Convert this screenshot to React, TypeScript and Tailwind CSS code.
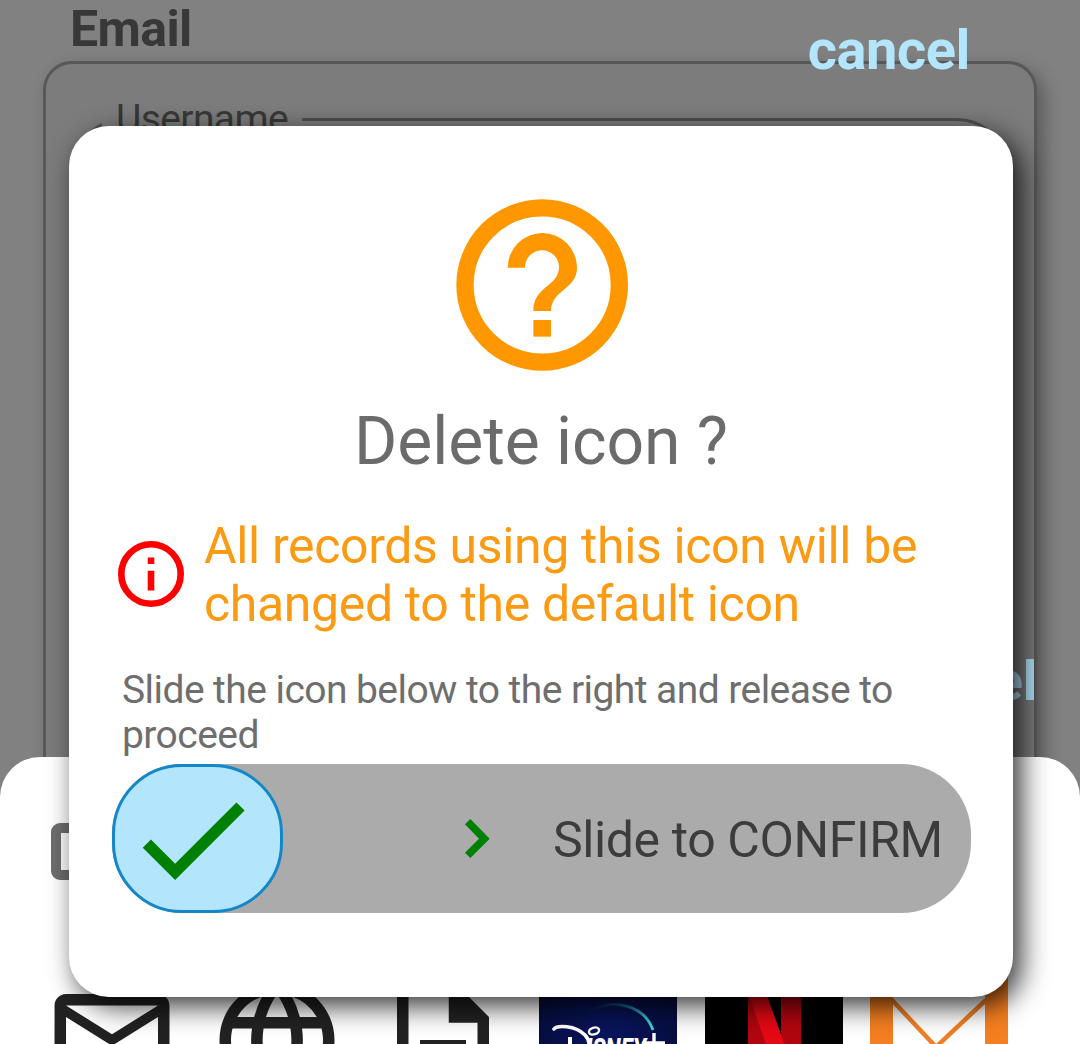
import { MdOutlineDescription, MdLanguage, MdMailOutline, MdCheck } from "react-icons/md";

function HelpIcon() {
  return (
    <svg className="mt-[54px] ml-[361px] h-[210px] w-[230px] shrink-0" viewBox="0 0 690 630" fill="#ff9800">
      <circle cx="336.5" cy="315" r="231.5" fill="none" stroke="#ff9800" strokeWidth="52" />
      <path d="M233 263A104 104 0 0 1 441 263C441 328 363 330 363 393H310C310 318 387 320 387 261A51 51 0 0 0 285 263Z" />
      <rect x="310" y="420" width="53" height="50" />
    </svg>
  );
}

function InfoIcon() {
  return (
    <svg className="-mt-[2px] h-[66px] w-[66px] shrink-0" viewBox="2 2 20 20" fill="#ff0000">
      <circle cx="12" cy="12" r="9" fill="none" stroke="#ff0000" strokeWidth="2" />
      <path d="M11 7h2v2h-2zM11 11h2v6h-2z" />
    </svg>
  );
}

function ArrowIcon() {
  return (
    <svg className="ml-[182px] h-[39px] w-[25px] shrink-0" viewBox="0 0 75 117" fill="#008000">
      <path d="M0 16L16 0L74 59L16 117L0 101L42 59Z" />
    </svg>
  );
}

function DisneyTile() {
  return (
    <svg className="h-[138px] w-[138px] shrink-0" viewBox="0 0 138 138">
      <defs>
        <radialGradient id="navy" cx="50%" cy="50%" r="65%">
          <stop offset="0" stopColor="#081660" />
          <stop offset="1" stopColor="#070b38" />
        </radialGradient>
        <linearGradient id="arc" x1="0" x2="1">
          <stop offset="0" stopColor="#0a2a70" stopOpacity="0" />
          <stop offset="0.6" stopColor="#14698c" />
          <stop offset="1" stopColor="#3fe0e6" />
        </linearGradient>
      </defs>
      <rect width="138" height="138" fill="url(#navy)" />
      <path d="M48 41C76 25 106 36 114 59" fill="none" stroke="url(#arc)" strokeWidth="2.8" />
      <path d="M15 58C18 54 36 54 46 64C54 73 50 83 38 86C24 88 20 76 33 75" fill="none" stroke="#fff" strokeWidth="3.6" strokeLinecap="round" />
      <path d="M31 66v24" stroke="#fff" strokeWidth="4" />
      <ellipse cx="55" cy="60" rx="5.2" ry="3.4" fill="none" stroke="#fff" strokeWidth="2.4" transform="rotate(-18 55 60)" />
      <text x="47" y="88" fontSize="29" fontWeight="800" fontStyle="italic" fill="#fff" textLength="60" lengthAdjust="spacingAndGlyphs">
        ISNEY
      </text>
      <path d="M115 62v26M105 72h21" stroke="#fff" strokeWidth="3.4" />
    </svg>
  );
}

function NetflixTile() {
  return (
    <svg className="h-[138px] w-[138px] shrink-0" viewBox="0 0 138 138">
      <rect width="138" height="138" fill="#000" />
      <path d="M43 22h18v94H43zM76 22h20v94H76z" fill="#b1060f" />
      <path d="M43 22h18l34 94H76z" fill="#e50914" />
    </svg>
  );
}

function MailTile() {
  return (
    <svg className="h-[138px] w-[138px] shrink-0" viewBox="0 0 138 138">
      <rect width="138" height="138" fill="#f57f20" />
      <path d="M23 23h92v92H23z" fill="#fff" />
      <path d="M22 29L66 76L116 29" fill="none" stroke="#f08025" strokeWidth="4.5" />
    </svg>
  );
}

function Backdrop() {
  return (
    <div className="flex h-[1044px] flex-col bg-[#818181] text-[#383838]">
      <h1 className="ml-[70px] h-[61px] shrink-0 text-[50px] leading-[58px] font-bold tracking-[-0.6px]">Email</h1>
      <section className="mr-[43px] ml-[43px] h-[900px] shrink-0 rounded-[29px] border-3 border-[#585858] bg-[#7c7c7c] pt-[35px] shadow-[7px_8px_18px_rgba(0,0,0,0.3)]">
        <fieldset className="mr-[24px] ml-[25px] h-[200px] rounded-[54px] border-[3px] border-[#505050] pl-[28px]">
          <legend className="px-[14px] text-[39px] leading-[40px] tracking-[-0.6px]">Username</legend>
        </fieldset>
      </section>
    </div>
  );
}

function IconSheet() {
  return (
    <section className="absolute inset-x-0 bottom-0 h-[287px] overflow-hidden rounded-t-[40px] bg-white pt-[66px] pl-[43px]">
      <div className="ml-[8px] h-[57px] w-[80px] rounded-[9px] border-[10px] border-[#6e6e6e]" />
      <div className="mt-[91px] flex w-[980px] gap-[27.4px] text-[#222]">
        <MdMailOutline className="size-[138px] shrink-0" />
        <MdLanguage className="size-[138px] shrink-0" />
        <MdOutlineDescription className="size-[138px] shrink-0" />
        <DisneyTile />
        <NetflixTile />
        <MailTile />
      </div>
    </section>
  );
}

function ConfirmDialog() {
  return (
    <section className="absolute top-[126px] left-[69px] flex h-[871px] w-[944px] flex-col rounded-[40px] bg-white shadow-[8px_9px_28px_rgba(0,0,0,0.8)]">
      <HelpIcon />
      <h2 className="mt-[13px] text-center text-[66px] leading-[77px] tracking-[-0.05px] text-[#6b6b6b]">Delete icon ?</h2>
      <div className="mt-[37px] ml-[48.5px] flex items-center gap-[20.5px] text-[#fb9a13]">
        <InfoIcon />
        <p className="text-[50px] leading-[58px] tracking-[-0.36px] whitespace-nowrap">
          All records using this icon will be
          <br />
          changed to the default icon
        </p>
      </div>
      <p className="mt-[35px] ml-[53px] text-[39px] leading-[45px] tracking-[-0.56px] whitespace-nowrap text-[#6e6e6e]">
        Slide the icon below to the right and release to
        <br />
        proceed
      </p>
      <div className="mt-[5.5px] ml-[43px] flex h-[149px] w-[859px] shrink-0 items-center rounded-[70px] bg-[#ababab]">
        <button className="flex h-[149px] w-[171px] items-center rounded-[70px] border-[3px] border-[#1487c9] bg-[#b3e5fc] pt-[3px] pl-[8px]">
          <MdCheck className="size-[139px] shrink-0 text-[#008000]" />
        </button>
        <ArrowIcon />
        <span className="ml-[63px] pt-[4px] text-[50px] leading-[58px] tracking-[-0.4px] whitespace-nowrap text-[#3c3c3c]">
          Slide to CONFIRM
        </span>
      </div>
    </section>
  );
}

export default function App() {
  return (
    <main className="relative h-[1044px] w-[1080px] overflow-hidden font-['Roboto',sans-serif]">
      <Backdrop />
      <span className="absolute top-[18px] right-[110px] text-[56px] leading-[64px] font-bold tracking-[-0.4px] text-[#b3e5fc]">cancel</span>
      <span className="absolute top-[649px] right-[43px] text-[56px] leading-[64px] font-bold tracking-[-0.4px] text-[#b3e5fc]">cancel</span>
      <IconSheet />
      <ConfirmDialog />
    </main>
  );
}
